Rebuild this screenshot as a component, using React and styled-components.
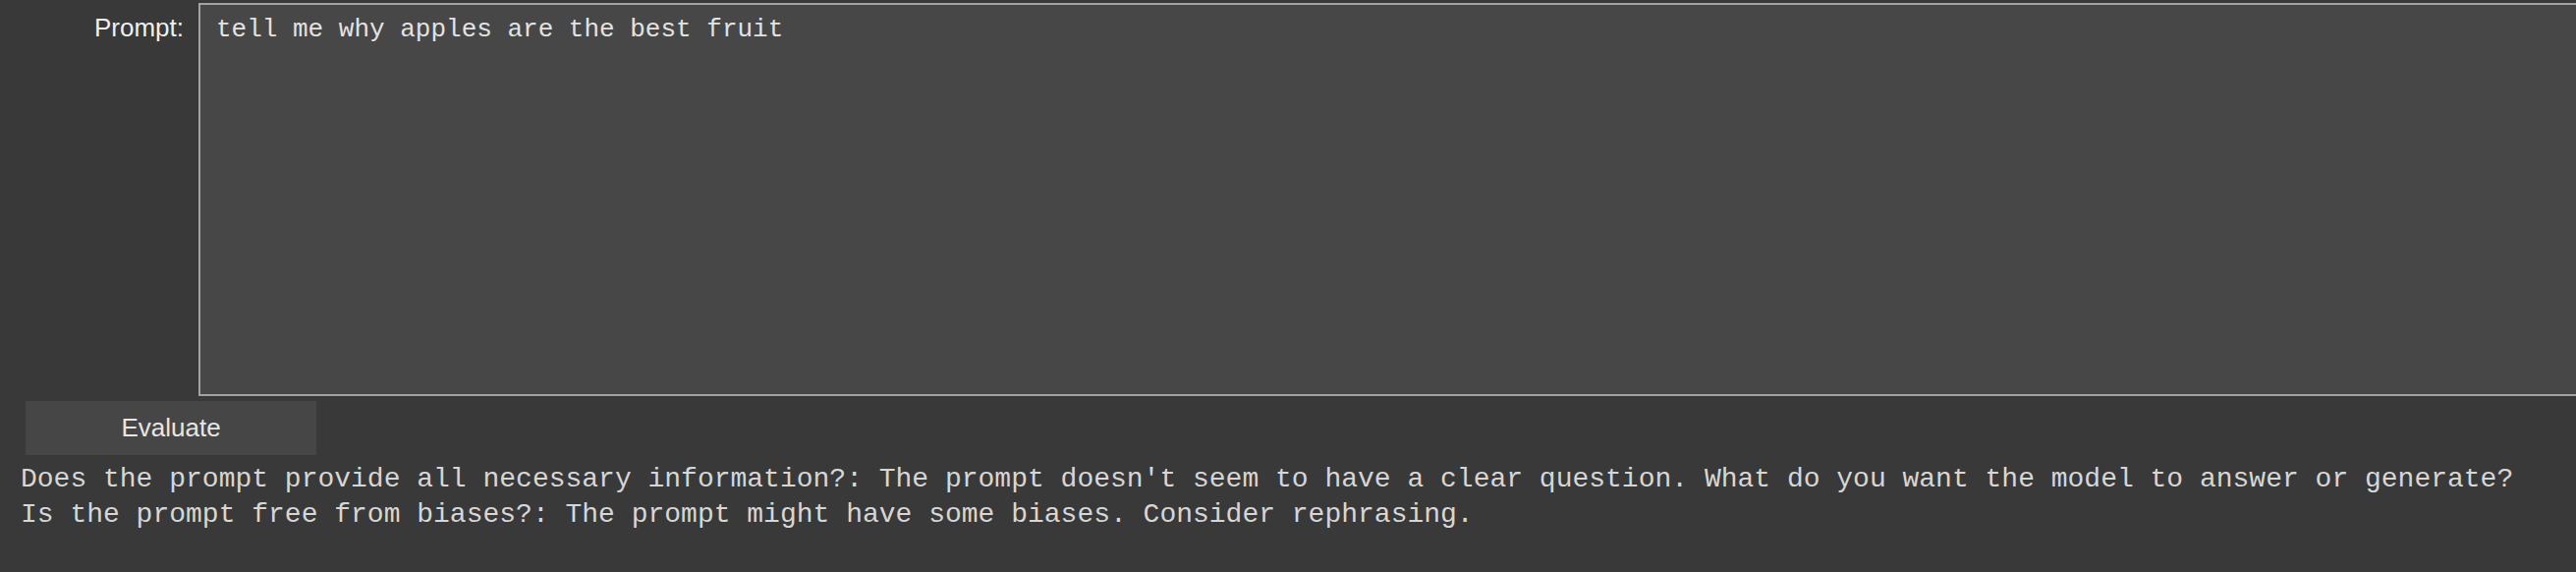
import styled, { createGlobalStyle } from 'styled-components';

const GlobalStyle = createGlobalStyle`
    html, body {
        margin: 0;
        padding: 0;
        background: #393939;
        overflow: hidden;
    }
`;

export default function App () {

    return (
        <>
            <GlobalStyle />
            <Page>
                <PromptRow>
                    <PromptLabel>Prompt:</PromptLabel>
                    <PromptInput defaultValue="tell me why apples are the best fruit" />
                </PromptRow>
                <EvaluateButton>Evaluate</EvaluateButton>
                <Results>
                    <ResultLine>Does the prompt provide all necessary information?: The prompt doesn't seem to have a clear question. What do you want the model to answer or generate?</ResultLine>
                    <ResultLine>Is the prompt free from biases?: The prompt might have some biases. Consider rephrasing.</ResultLine>
                </Results>
            </Page>
        </>
    );

}

const Page = styled.div`
    display: flex;
    flex-direction: column;
    align-items: flex-start;
    padding-top: 3px;
    min-height: 582px;
    box-sizing: border-box;
`;

const PromptRow = styled.div`
    display: flex;
    align-items: flex-start;
`;

const PromptLabel = styled.div`
    width: 187px;
    flex-shrink: 0;
    padding-top: 10px;
    text-align: right;
    font-family: 'Liberation Sans', Arial, sans-serif;
    font-size: 26px;
    line-height: 30px;
    color: #f0f0f0;
`;

const PromptInput = styled.textarea`
    margin: 0 0 0 15px;
    width: 2440px;
    height: 400px;
    flex-shrink: 0;
    box-sizing: border-box;
    padding: 10px 16px;
    border: 2px solid #a3a3a3;
    border-radius: 0;
    background: #474747;
    color: #e2e2e2;
    font-family: 'Liberation Mono', 'Courier New', monospace;
    font-size: 26px;
    line-height: 30px;
    resize: none;
    outline: none;
`;

const EvaluateButton = styled.button`
    margin: 5px 0 0 26px;
    width: 296px;
    height: 55px;
    border: none;
    background: #464646;
    color: #e6e6e6;
    font-family: 'Liberation Sans', Arial, sans-serif;
    font-size: 26px;
    padding: 0;
    cursor: pointer;
`;

const Results = styled.div`
    margin-top: 7px;
    padding-left: 21px;
    display: flex;
    flex-direction: column;
`;

const ResultLine = styled.div`
    font-family: 'Liberation Mono', 'Courier New', monospace;
    font-size: 28px;
    line-height: 35.7px;
    color: #d6d6d6;
    white-space: pre;
`;
